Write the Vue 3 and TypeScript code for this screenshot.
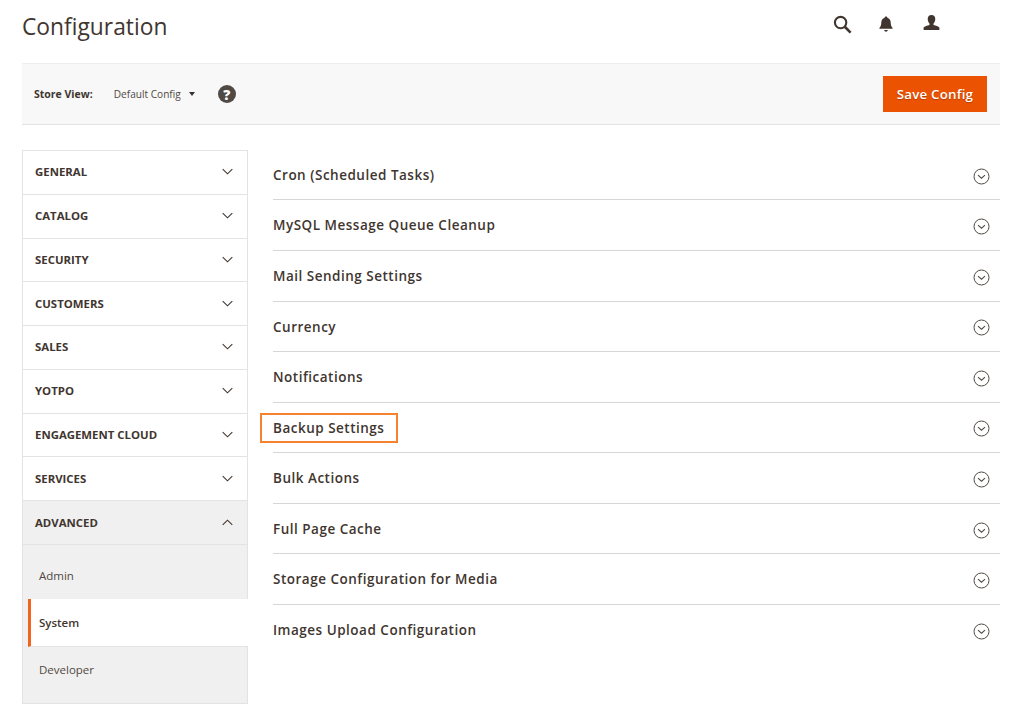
<template>
  <div class="page">
    <header class="page-header">
      <h1>Configuration</h1>
      <div class="header-icons">
        <svg class="icon-search" width="19" height="19" viewBox="0 0 20 20">
          <circle cx="8" cy="8" r="6" fill="none" stroke="#41362f" stroke-width="2.200" />
          <path d="M12.400 12.400L18.500 18.500" fill="none" stroke="#41362f" stroke-width="2.800" />
        </svg>
        <svg class="icon-bell" width="14" height="16" viewBox="0 0 14 16">
          <path d="M7 .6c.8 0 1.300.5 1.400 1.200 2.200.6 3.200 2.400 3.300 4.700.1 2.600.6 4 1.900 5.400v.9H.4v-.9c1.300-1.400 1.800-2.800 1.900-5.400.1-2.300 1.100-4.100 3.300-4.700C5.700 1.100 6.200.6 7 .6z" fill="#41362f" />
          <path d="M5.200 14h3.600c-.1 1-.9 1.700-1.800 1.700S5.300 15 5.200 14z" fill="#41362f" />
        </svg>
        <svg class="icon-user" width="17" height="15" viewBox="0 0 17 15">
          <path d="M8.500 0C10.900 0 12.300 1.600 12.300 4.100c0 1.900-.8 3.500-1.800 4.500v1.300c2.400.7 4.900 1.300 5.900 2.500V15H.6v-2.600c1-1.200 3.500-1.800 5.900-2.500V8.600c-1-1-1.800-2.600-1.800-4.500C4.700 1.600 6.100 0 8.500 0z" fill="#41362f" />
        </svg>
      </div>
    </header>

    <div class="toolbar">
      <span class="store-label">Store View:</span>
      <span class="store-value">Default Config</span>
      <span class="caret"></span>
      <span class="help">?</span>
      <button class="save-btn" type="button">Save Config</button>
    </div>

    <div class="columns">
      <aside class="sidebar">
        <div
          v-for="item in menu"
          :key="item"
          class="menu-row"
          :class="{ open: item === 'ADVANCED' }"
        >
          <span>{{ item }}</span>
          <svg width="11" height="7" viewBox="0 0 11 7">
            <path
              :d="item === 'ADVANCED' ? 'M.7 5.800L5.500 1.200L10.300 5.800' : 'M.7 1.200L5.500 5.800L10.300 1.200'"
              fill="none"
              stroke="#41362f"
              stroke-width="1.100"
            />
          </svg>
        </div>
        <div class="submenu">
          <div
            v-for="sub in subItems"
            :key="sub"
            class="sub-row"
            :class="{ active: sub === 'System' }"
          >
            {{ sub }}
          </div>
        </div>
      </aside>

      <main class="sections">
        <div v-for="section in sections" :key="section" class="section-row">
          <span class="section-title" :class="{ marked: section === 'Backup Settings' }">{{ section }}</span>
          <svg class="section-toggle" width="17" height="17" viewBox="0 0 17 17">
            <circle cx="8.500" cy="8.500" r="7.500" fill="none" stroke="#514943" stroke-width="1" />
            <path d="M5 7.200L8.500 10.200L12 7.200" fill="none" stroke="#514943" stroke-width="1.100" />
          </svg>
        </div>
      </main>
    </div>
  </div>
</template>

<script setup lang="ts">
const menu: string[] = [
  'GENERAL',
  'CATALOG',
  'SECURITY',
  'CUSTOMERS',
  'SALES',
  'YOTPO',
  'ENGAGEMENT CLOUD',
  'SERVICES',
  'ADVANCED',
];

const subItems: string[] = ['Admin', 'System', 'Developer'];

const sections: string[] = [
  'Cron (Scheduled Tasks)',
  'MySQL Message Queue Cleanup',
  'Mail Sending Settings',
  'Currency',
  'Notifications',
  'Backup Settings',
  'Bulk Actions',
  'Full Page Cache',
  'Storage Configuration for Media',
  'Images Upload Configuration',
];
</script>

<style>
html,
body {
  margin: 0;
  background: #fff;
}
</style>

<style scoped>
.page {
  width: 978px;
  height: 715px;
  padding-left: 22px;
  overflow: hidden;
  font-family: "Open Sans", sans-serif;
  color: #41362f;
}

/* Header */
.page-header {
  display: flex;
  justify-content: space-between;
  height: 63px;
}

.page-header h1 {
  margin: 10px 0 0;
  font-size: 22.800px;
  line-height: 33px;
  font-weight: 400;
}

.header-icons {
  display: flex;
  align-items: flex-start;
  margin-right: 60px;
}

.icon-search {
  margin: 15px 27px 0 0;
}

.icon-bell {
  margin: 16px 30px 0 0;
}

.icon-user {
  margin: 15px 0 0 0;
}

/* Toolbar */
.toolbar {
  display: flex;
  align-items: center;
  box-sizing: border-box;
  height: 62px;
  padding: 0 13px 0 12px;
  background: #f8f8f8;
  border-top: 1px solid #eeeeee;
  border-bottom: 1px solid #e3e3e3;
}

.store-label {
  font-size: 10.500px;
  font-weight: 700;
}

.store-value {
  margin-left: 21px;
  font-size: 10.100px;
  color: #514943;
}

.caret {
  margin-left: 8px;
  border-top: 4px solid #333;
  border-left: 3.500px solid transparent;
  border-right: 3.500px solid transparent;
}

.help {
  display: flex;
  align-items: center;
  justify-content: center;
  width: 18px;
  height: 18px;
  margin-left: 23px;
  border-radius: 50%;
  background: #514943;
  color: #fff;
  font-size: 14px;
  font-weight: 800;
}

.save-btn {
  width: 104px;
  height: 36px;
  margin-left: auto;
  padding: 0;
  border: none;
  background: #eb5202;
  color: #fff;
  font-family: inherit;
  font-size: 13.300px;
  font-weight: 600;
  letter-spacing: 0.2px;
  text-shadow: 0 1px 1px rgba(0, 0, 0, 0.25);
}

/* Columns */
.columns {
  display: flex;
  align-items: flex-start;
  margin-top: 25px;
}

.sidebar {
  box-sizing: border-box;
  width: 226px;
  border: 1px solid #e3e3e3;
}

.menu-row {
  display: flex;
  align-items: center;
  justify-content: space-between;
  box-sizing: border-box;
  height: 43.750px;
  padding: 0 14px 1px 12px;
  border-bottom: 1px solid #e3e3e3;
  font-size: 11.400px;
  font-weight: 700;
}

.menu-row.open {
  padding-bottom: 0;
  background: #f0f0f0;
}

.submenu {
  background: #f0f0f0;
  padding-bottom: 12px;
}

.sub-row {
  display: flex;
  align-items: center;
  box-sizing: border-box;
  height: 44px;
  padding-left: 16px;
  font-size: 11.500px;
  color: #514943;
}

.sub-row:first-child {
  height: 54.400px;
  padding-top: 8px;
}

.sub-row.active {
  height: 48px;
  margin: 0 -1px 0 5px;
  padding-left: 8px;
  border-left: 3px solid #f0641e;
  border-bottom: 1px solid #e3e3e3;
  background: #fff;
  color: #41362f;
  font-weight: 600;
}

/* Sections */
.sections {
  flex: 1;
  margin-top: -0.100px;
  margin-left: 25px;
}

.section-row {
  display: flex;
  align-items: center;
  justify-content: space-between;
  box-sizing: border-box;
  height: 50.550px;
  padding-right: 10px;
  border-bottom: 1px solid #d6d6d6;
}

.section-row:last-child {
  border-bottom: none;
}

.section-toggle {
  margin-top: 3px;
}

.section-title {
  position: relative;
  margin-top: 0.500px;
  font-size: 13.500px;
  font-weight: 600;
  letter-spacing: 0.5px;
}

.section-title.marked::after {
  content: "";
  position: absolute;
  top: -6px;
  right: -14px;
  bottom: -6px;
  left: -13px;
  border: 2px solid #f5822f;
}
</style>
